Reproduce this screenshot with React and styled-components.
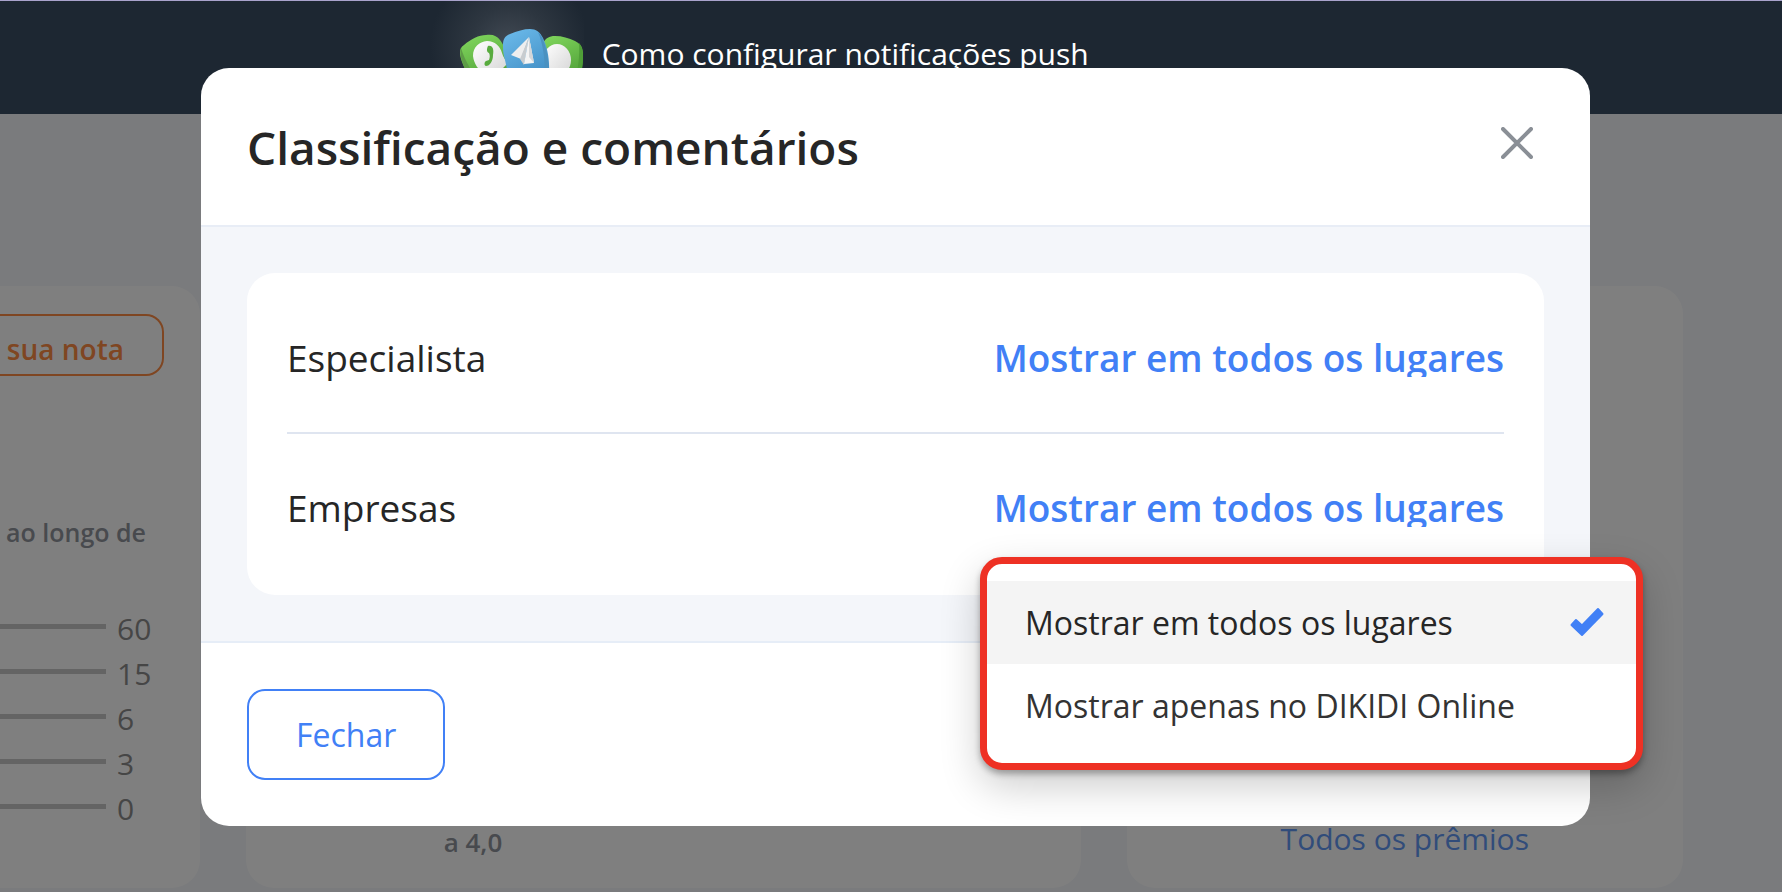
import React, { useState } from "react";
import styled, { createGlobalStyle } from "styled-components";

const GlobalStyle = createGlobalStyle`
  *, *::before, *::after { box-sizing: border-box; }
  body {
    margin: 0;
    font-family: "Open Sans", "Noto Sans", sans-serif;
    color: #262626;
    background: #f4f6fa;
  }
  button, select { font-family: inherit; }
`;

const Page = styled.div`
  position: relative;
  display: flex;
  flex-direction: column;
  min-height: 100vh;
  overflow: hidden;
`;

const Banner = styled.header`
  position: relative;
  z-index: 2;
  display: flex;
  gap: 18px;
  height: 114px;
  padding-left: 24%;
  border-top: 1px solid #a9a3cc;
  background: #1d2732;
`;

const BannerArt = styled.svg`
  flex: none;
  width: 156px;
  height: 113px;
`;

const BannerText = styled.span`
  color: #fff;
  font-size: 30px;
  line-height: 106px;
  white-space: nowrap;
`;

const Board = styled.main`
  flex: 1;
  display: grid;
  grid-template-columns: 200px 3fr 2fr;
  gap: 46px;
  padding: 172px 99px 4px 0;
`;

const Card = styled.section`
  display: flex;
  flex-direction: column;
  justify-content: ${(p) => (p.$bottom ? "flex-end" : "flex-start")};
  padding: 28px 0;
  border-radius: ${(p) => (p.$cut ? "0 28px 28px 0" : "28px")};
  background: #fff;
  overflow: hidden;
`;

const RateButton = styled.button`
  display: flex;
  align-items: center;
  justify-content: flex-end;
  height: 62px;
  margin-right: 36px;
  padding: 8px 38px 0 0;
  border: 2px solid #fe8c44;
  border-left: 0;
  border-radius: 0 18px 18px 0;
  background: none;
  color: #fe8c44;
  font-size: 28px;
  font-weight: 600;
  white-space: nowrap;
`;

const Period = styled.p`
  margin: 139px 54px 56px 0;
  color: #90959c;
  font-size: 25px;
  font-weight: 600;
  line-height: 34px;
  text-align: right;
  white-space: nowrap;
`;

const Scores = styled.ul`
  margin: 0;
  padding: 0;
  list-style: none;
`;

const Score = styled.li`
  display: grid;
  grid-template-columns: 106px 1fr;
  align-items: center;
  gap: 11px;
  height: 45px;
  color: #8c8c8c;
  font-size: 30px;
  line-height: 48px;
`;

const ScoreBar = styled.span`
  height: 5px;
  margin-bottom: 5px;
  background: #c8c8c8;
`;

const Goal = styled.p`
  width: 454px;
  margin: 0;
  color: #90959c;
  font-size: 26px;
  font-weight: 600;
  line-height: 36px;
  text-align: center;
`;

const AwardsLink = styled.a`
  align-self: center;
  color: #6299f4;
  font-size: 30px;
  line-height: 42px;
  text-decoration: none;
`;

const Backdrop = styled.div`
  position: absolute;
  inset: 0;
  z-index: 1;
  background: rgba(0, 0, 0, 0.5);
`;

const ModalLayer = styled.div`
  position: absolute;
  inset: 0;
  z-index: 3;
  padding: 68px 192px 0 201px;
`;

const Modal = styled.div`
  border-radius: 28px;
  background: #fff;
`;

const ModalHeader = styled.div`
  display: flex;
  align-items: center;
  justify-content: space-between;
  height: 159px;
  padding: 0 57px 0 46px;
  border-bottom: 2px solid #e8edf6;
`;

const Title = styled.h1`
  margin: 0;
  font-size: 46px;
  font-weight: 600;
  line-height: 64px;
`;

const CloseButton = styled.button`
  display: flex;
  padding: 0 0 8px;
  border: 0;
  background: none;
  cursor: pointer;
`;

const ModalBody = styled.div`
  padding: 46px;
  border-bottom: 2px solid #e6edf7;
  background: #f4f6fa;
`;

const Settings = styled.div`
  padding: 11px 40px 13px;
  border-radius: 28px;
  background: #fff;
`;

const Row = styled.div`
  display: flex;
  align-items: center;
  justify-content: space-between;
  height: 148px;

  & + & {
    height: 150px;
    border-top: 2px solid #dfe5f0;
  }
`;

const RowLabel = styled.label`
  font-size: 37px;
  line-height: 52px;
`;

const Field = styled.div`
  position: relative;
`;

const Value = styled.select`
  display: block;
  height: 38px;
  padding: 0;
  border: 0;
  outline: 0;
  appearance: none;
  overflow: hidden;
  background: none;
  color: #4180f6;
  font-size: 37px;
  font-weight: 600;
  line-height: 38px;
  text-align-last: right;
  cursor: pointer;
`;

const Menu = styled.ul`
  position: absolute;
  top: 68px;
  right: -139px;
  width: 663px;
  margin: 0;
  padding: 17px 0 16px;
  border: 7px solid #ee3124;
  border-radius: 22px;
  background: #fff;
  box-shadow: 0 4px 6px rgba(0, 0, 0, 0.3), 0 16px 40px rgba(0, 0, 0, 0.2);
  list-style: none;
`;

const MenuItem = styled.button`
  display: flex;
  align-items: center;
  justify-content: space-between;
  width: 100%;
  height: 83px;
  padding: 0 32px 0 38px;
  border: 0;
  background: ${(p) => (p.$active ? "#f4f4f4" : "#fff")};
  color: ${(p) => (p.$active ? "#262626" : "#333")};
  font-size: 32px;
  text-align: left;
  cursor: pointer;
`;

const ModalFooter = styled.div`
  padding: 46px;
`;

const DismissButton = styled.button`
  height: 91px;
  padding: 0 47px;
  border: 2px solid #4180f6;
  border-radius: 18px;
  background: #fff;
  color: #4180f6;
  font-size: 32px;
  cursor: pointer;
`;

const scores = [60, 15, 6, 3, 0];
const options = ["Mostrar em todos os lugares", "Mostrar apenas no DIKIDI Online"];
const rows = [
  { id: "specialist", label: "Especialista" },
  { id: "company", label: "Empresas" },
];

function MessengerArt() {
  return (
    <BannerArt viewBox="0 0 156 113" aria-hidden="true">
      <defs>
        <radialGradient id="glow" gradientUnits="userSpaceOnUse" cx="82" cy="46" r="80">
          <stop offset="0" stopColor="#434b55" />
          <stop offset="0.5" stopColor="#2d3640" />
          <stop offset="1" stopColor="#1d2732" />
        </radialGradient>
        <linearGradient id="green" x1="0" y1="0" x2="0.4" y2="1">
          <stop offset="0" stopColor="#83d95f" />
          <stop offset="1" stopColor="#4f9f37" />
        </linearGradient>
        <linearGradient id="blue" x1="0" y1="0" x2="0.5" y2="1">
          <stop offset="0" stopColor="#6dbcec" />
          <stop offset="1" stopColor="#4390c6" />
        </linearGradient>
        <linearGradient id="paper" x1="0" y1="0" x2="1" y2="1">
          <stop offset="0" stopColor="#fff" />
          <stop offset="1" stopColor="#d5d5d5" />
        </linearGradient>
      </defs>
      <rect width="156" height="113" fill="url(#glow)" />
      <path d="M115 42C118 37 121 35 127 35C134 35 141 37 147 40C153 43 155 47 155 54C155 64 153 74 151 80L114 86L110 60Z" fill="url(#green)" />
      <path d="M151 42C154 45 155 50 155 56C155 66 153 74 151 80L147 80C150 68 152 55 151 42Z" fill="#4f9f37" />
      <ellipse cx="129" cy="59" rx="14" ry="16" fill="url(#paper)" />
      <path d="M36 44C43 38 51 34 58 34C65 33 69 35 72 39C78 47 82 58 83 75L50 86L38 70C34 62 32 56 32 52C32 48 33 46 36 44Z" fill="url(#green)" />
      <path d="M33 47C31 54 35 64 40 74L45 78L42 67C38 60 35 54 33 47Z" fill="#5d9c46" />
      <path d="M59 40C67 40 72 45 74 52C75 56 78 60 80 62L75 67C70 72 64 74 57 72C50 69 46 63 45 55C45 46 51 41 59 40Z" fill="url(#paper)" />
      <path d="M60 45C65 44 66 49 65 54C65 60 62 65 58 65C56 65 56 61 58 60L61 59C62 56 62 54 61 52C58 51 59 47 60 45Z" fill="#58ab3e" />
      <path d="M75 44C75 38 77 35 82 33C89 30 96 28 102 28C108 28 112 31 115 37C119 46 122 56 121 76L82 82L77 59C75 52 75 48 75 44Z" fill="url(#blue)" />
      <path d="M110 31C115 35 121 50 121 76L117 76C117 57 115 43 110 31Z" fill="#4a91c0" />
      <path d="M101 36L83 54L93 58Z" fill="#eee" />
      <path d="M101 36L92 58L96 64Z" fill="#c8cccf" />
      <path d="M101 36L96 63L106 62Z" fill="#f4f4f4" />
      <path d="M101 36L101 56L106 62Z" fill="#d4d6d8" />
    </BannerArt>
  );
}

function CloseIcon() {
  return (
    <svg width="32" height="32" viewBox="0 0 32 32" fill="none" stroke="#8a8f96" strokeWidth="4" strokeLinecap="round" aria-hidden="true">
      <path d="M2 2L30 30M30 2L2 30" />
    </svg>
  );
}

function CheckIcon() {
  return (
    <svg width="34" height="32" viewBox="0 0 34 32" aria-hidden="true">
      <path
        d="M1.500 18L6 13L12 18.500L28 2L32.500 7L12 28Z"
        fill="#4180f6"
        stroke="#4180f6"
        strokeWidth="2"
        strokeLinejoin="round"
      />
    </svg>
  );
}

export default function App() {
  const [values, setValues] = useState({ specialist: options[0], company: options[0] });
  const [openId, setOpenId] = useState("company");

  const toggle = (e, id) => {
    // the custom menu replaces the native popup
    e.preventDefault();
    setOpenId(openId === id ? null : id);
  };

  const pick = (id, value) => {
    setValues({ ...values, [id]: value });
    setOpenId(null);
  };

  return (
    <>
      <GlobalStyle />
      <Page>
        <Banner>
          <MessengerArt />
          <BannerText>Como configurar notificações push</BannerText>
        </Banner>
        <Board>
          <Card $cut>
            <RateButton type="button">r sua nota</RateButton>
            <Period>ao longo de</Period>
            <Scores>
              {scores.map((score) => (
                <Score key={score}>
                  <ScoreBar />
                  {score}
                </Score>
              ))}
            </Scores>
          </Card>
          <Card $bottom>
            <Goal>a 4,0</Goal>
          </Card>
          <Card $bottom>
            <AwardsLink href="#awards">Todos os prêmios</AwardsLink>
          </Card>
        </Board>
        <Backdrop />
        <ModalLayer>
          <Modal role="dialog" aria-labelledby="modal-title">
            <ModalHeader>
              <Title id="modal-title">Classificação e comentários</Title>
              <CloseButton type="button" aria-label="Fechar">
                <CloseIcon />
              </CloseButton>
            </ModalHeader>
            <ModalBody>
              <Settings>
                {rows.map((row) => (
                  <Row key={row.id}>
                    <RowLabel htmlFor={row.id}>{row.label}</RowLabel>
                    <Field>
                      <Value
                        id={row.id}
                        value={values[row.id]}
                        onMouseDown={(e) => toggle(e, row.id)}
                        onChange={(e) => pick(row.id, e.target.value)}
                      >
                        {options.map((option) => (
                          <option key={option}>{option}</option>
                        ))}
                      </Value>
                      {openId === row.id && (
                        <Menu>
                          {options.map((option) => (
                            <li key={option}>
                              <MenuItem
                                type="button"
                                $active={option === values[row.id]}
                                onClick={() => pick(row.id, option)}
                              >
                                {option}
                                {option === values[row.id] && <CheckIcon />}
                              </MenuItem>
                            </li>
                          ))}
                        </Menu>
                      )}
                    </Field>
                  </Row>
                ))}
              </Settings>
            </ModalBody>
            <ModalFooter>
              <DismissButton type="button">Fechar</DismissButton>
            </ModalFooter>
          </Modal>
        </ModalLayer>
      </Page>
    </>
  );
}
